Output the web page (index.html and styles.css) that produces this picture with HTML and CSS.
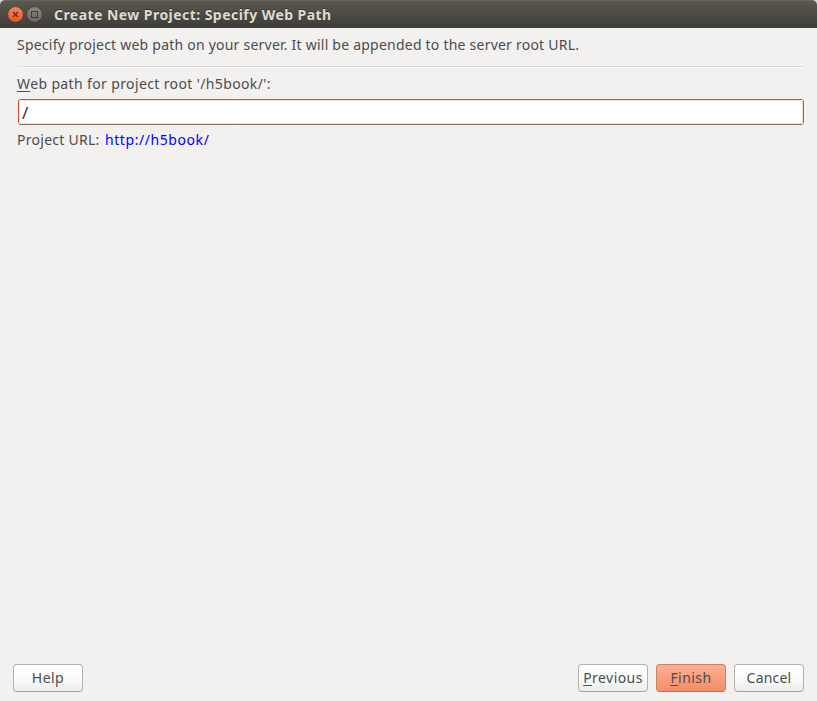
FILE: index.html
```html
<!DOCTYPE html>
<html lang="en">
<head>
<meta charset="utf-8">
<title>Create New Project: Specify Web Path</title>
<link rel="stylesheet" href="styles.css">
</head>
<body>
<div class="window">
  <header class="titlebar">
    <svg class="controls" width="38" height="20" viewBox="0 0 38 20">
      <defs>
        <linearGradient id="close" x1="0" y1="0" x2="0" y2="1"><stop offset="0" stop-color="#f58462"/><stop offset="1" stop-color="#e8531f"/></linearGradient>
        <linearGradient id="max" x1="0" y1="0" x2="0" y2="1"><stop offset="0" stop-color="#8b897f"/><stop offset="1" stop-color="#65635c"/></linearGradient>
      </defs>
      <circle cx="9.5" cy="9.5" r="7.9" fill="url(#close)" stroke="#45372f" stroke-width=".8"/>
      <path d="M7 7l5 5M12 7l-5 5" stroke="#5b301e" stroke-width="1.3"/>
      <circle cx="28.5" cy="9.5" r="7.9" fill="url(#max)" stroke="#383630" stroke-width=".8"/>
      <rect x="25.5" y="6.5" width="6" height="6" fill="none" stroke="#3c3b37"/>
    </svg>
    <h1 class="title">Create New Project: Specify Web Path</h1>
  </header>
  <main class="content">
    <p class="description">Specify project web path on your server. It will be appended to the server root URL.</p>
    <hr class="divider">
    <label class="path-label" for="path"><span class="mnemonic">W</span>eb path for project root '/h5book/':</label>
    <div class="field">
      <svg class="field-frame" width="786" height="26">
        <rect x=".5" y=".5" width="785" height="25" rx="2" fill="#fff" stroke="#ed6a41"/>
        <rect x="1.5" y="1.5" width="783" height="23" rx="1" fill="none" stroke="#f9ddd0"/>
        <path d="M2 .5H784M2 25.5H784M.5 2V24M785.5 2V24" fill="none" stroke="#65584a" stroke-dasharray="1 1"/>
      </svg>
      <input class="path-input" id="path" type="text" value="/">
    </div>
    <p class="url"><span class="url-label">Project URL:</span><a class="link">http://h5book/</a></p>
  </main>
  <footer class="actions">
    <button class="button help">Help</button>
    <button class="button previous"><span class="mnemonic">P</span>revious</button>
    <button class="button primary"><span class="mnemonic">F</span>inish</button>
    <button class="button cancel">Cancel</button>
  </footer>
</div>
</body>
</html>
```
FILE: styles.css
```css
* { box-sizing: border-box; }
body { margin: 0; background: #d8d8d8; font: 14px/20px "Noto Sans", sans-serif; color: #4c4c4c; }
.window { height: 701px; display: flex; flex-direction: column; background: #f2f1f0; border-radius: 5px 5px 0 0; white-space: nowrap; }
.titlebar { height: 28px; display: flex; align-items: center; padding: 1px 6px 0; background: linear-gradient(#5b584f, #3d3c38); border-top: 1px solid #67645a; border-radius: 5px 5px 0 0; }
.controls { display: block; }
.title { margin: 0 0 0 10px; font-size: 14px; line-height: 20px; font-weight: 700; letter-spacing: .45px; color: #dfdbd2; text-shadow: 0 -1px #35342f; }
.content { flex: 1; padding: 7px 13px 0 17px; }
.description { margin: 0; height: 20px; letter-spacing: .226px; }
.divider { height: 2px; margin: 11px 1px 0; border: 0; border-top: 1px solid #dcdbd9; background: #fafafa; }
.path-label { display: block; margin-top: 6px; letter-spacing: .37px; }
.mnemonic { text-decoration: underline; text-underline-offset: 2px; text-decoration-thickness: 1px; text-decoration-skip-ink: none; }
.field { display: grid; margin: 5px 0 0 1px; height: 26px; }
.field-frame, .path-input { grid-area: 1 / 1; }
.path-input { width: 780px; height: 22px; margin: 2px 3px; padding: 1px 1px 0; border: 0; outline: 0; background: transparent; color: #333; font: 17px/21px "Noto Sans", sans-serif; }
.url { margin: 5px 0 0; display: flex; gap: 5px; }
.url-label { width: 83px; letter-spacing: .27px; }
.link { color: #00f; letter-spacing: .57px; }
.actions { display: flex; gap: 8px; padding: 0 13px 9px; }
.button { width: 70px; height: 28px; padding: 0; border: 1px solid #b4b2af; border-bottom-color: #a5a39f; border-radius: 4px; background: linear-gradient(#fff, #fbfbfb 50%, #ececeb); font: inherit; letter-spacing: .45px; color: #4c4c4c; }
.help { margin-right: auto; }
.primary { background: linear-gradient(#fbb093, #f58e68); border-color: #c98266; border-bottom-color: #b97456; }
.cancel { letter-spacing: .2px; }
```
